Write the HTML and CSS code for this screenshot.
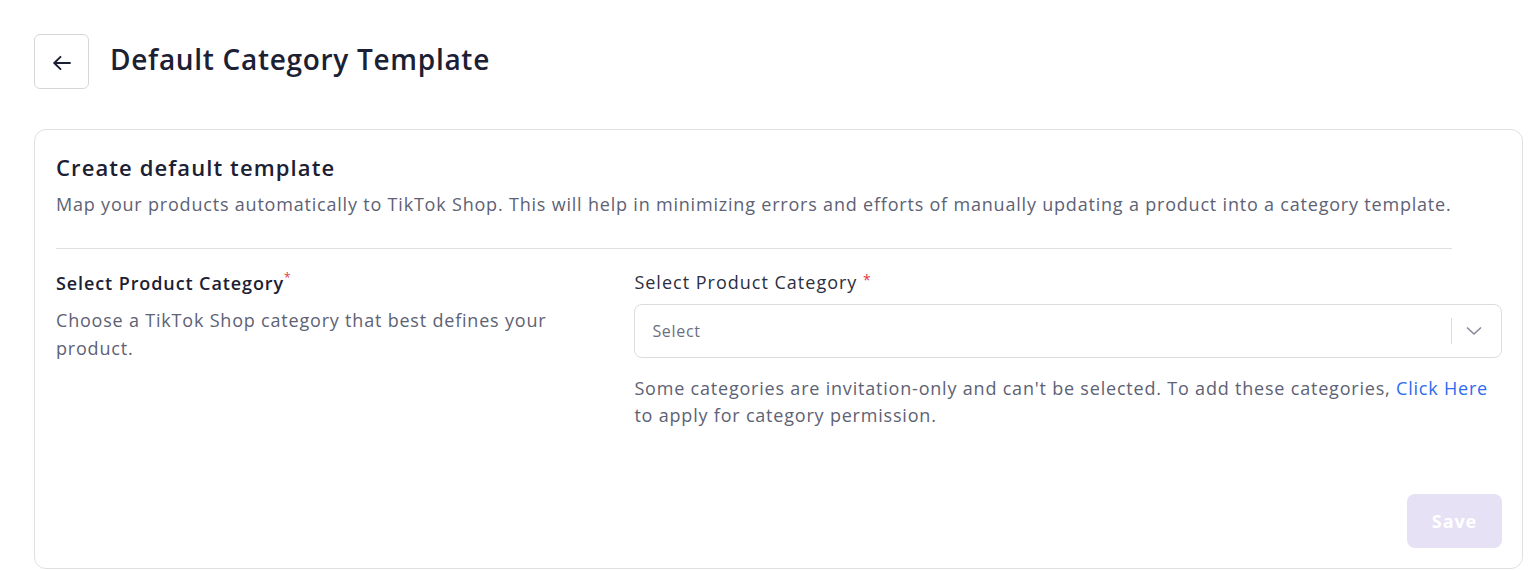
FILE: index.html
```html
<!DOCTYPE html>
<html lang="en">
<head>
<meta charset="utf-8">
<title>Default Category Template</title>
<link rel="stylesheet" href="styles.css">
</head>
<body>
<div class="page">
  <div class="page-header">
    <button class="back-btn" aria-label="Back">
      <svg width="20" height="20" viewBox="0 0 20 20" fill="none" stroke="#1c2033" stroke-width="1.9" stroke-linecap="round" stroke-linejoin="round">
        <path d="M18 10H2.5"/>
        <path d="M8.5 3.8L2.3 10l6.2 6.2"/>
      </svg>
    </button>
    <h1 class="page-title">Default Category Template</h1>
  </div>

  <section class="card">
    <div class="card-head">
      <h2 class="card-title">Create default template</h2>
      <p class="card-desc">Map your products automatically to TikTok Shop. This will help in minimizing errors and efforts of manually updating a product into a category template.</p>
    </div>

    <div class="form-row">
      <div class="form-info">
        <div class="info-title">Select Product Category<span class="req req-sm">*</span></div>
        <p class="info-desc">Choose a TikTok Shop category that best defines your product.</p>
      </div>
      <div class="form-field">
        <label class="field-label">Select Product Category <span class="req">*</span></label>
        <div class="select">
          <span class="select-placeholder">Select</span>
          <span class="select-sep"></span>
          <svg class="select-chevron" width="16" height="16" viewBox="0 0 16 16" fill="none" stroke="#8a8d99" stroke-width="1.7" stroke-linecap="round" stroke-linejoin="round">
            <path d="M1.5 5L8 11l6.5-6"/>
          </svg>
        </div>
        <p class="field-help">Some categories are invitation-only and can't be selected. To add these categories, <a class="link" href="#">Click Here</a> to apply for category permission.</p>
      </div>
    </div>

    <div class="card-actions">
      <button class="save-btn" disabled>Save</button>
    </div>
  </section>
</div>
</body>
</html>
```

FILE: styles.css
```css
* { box-sizing: border-box; }
html, body { margin: 0; padding: 0; background: #ffffff; }
body {
  font-family: "Open Sans", "Liberation Sans", sans-serif;
  color: #1c2033;
  letter-spacing: 0.8px;
}
.page { padding: 34px 14px 0 34px; }

.page-header {
  display: flex;
  align-items: center;
  gap: 21px;
}
.back-btn {
  width: 55px;
  height: 55px;
  border: 1px solid #d6d6d9;
  border-radius: 6px;
  background: #fff;
  display: flex;
  align-items: center;
  justify-content: center;
  padding: 0;
  padding-top: 2px;
}
.page-title {
  margin: 0 0 6px;
  font-size: 28px;
  font-weight: 600;
  color: #1c2033;
  letter-spacing: 0.7px;
}

.card {
  margin-top: 40px;
  border: 1px solid #e0e0e3;
  border-radius: 12px;
  padding: 21px 20px 20px 21px;
  min-height: 440px;
  display: flex;
  flex-direction: column;
}
.card-head {
  width: fit-content;
  border-bottom: 1px solid #e0e0e3;
  padding-bottom: 31px;
}
.card-title {
  margin: 1px 0 0;
  font-size: 22px;
  line-height: 30px;
  font-weight: 600;
  color: #1c2033;
  letter-spacing: 1.1px;
}
.card-desc {
  margin: 9px 0 0;
  font-size: 18px;
  line-height: 26px;
  color: #5d6274;
}

.form-row {
  display: grid;
  grid-template-columns: 2fr 3fr;
  margin-top: 21px;
}
.form-info { padding-right: 40px; }
.info-title {
  font-size: 18px;
  line-height: 26px;
  font-weight: 600;
  color: #1c2033;
  letter-spacing: 0.9px;
}
.req { color: #e0383e; font-size: 14px; vertical-align: top; font-weight: 400; line-height: 20px; letter-spacing: 0; }
.req-sm { font-size: 12px; line-height: 16px; }
.info-desc {
  margin: 10px 0 0;
  font-size: 18px;
  line-height: 28px;
  color: #5d6274;
}

.field-label {
  display: block;
  font-size: 18px;
  line-height: 24px;
  color: #2b2f40;
  letter-spacing: 1px;
}
.select {
  margin-top: 10px;
  height: 54px;
  border: 1px solid #dcdce0;
  border-radius: 8px;
  display: flex;
  align-items: center;
  padding: 0 19px 0 17px;
}
.select-placeholder {
  flex: 1;
  font-size: 16px;
  color: #6b6f7e;
  letter-spacing: 0.7px;
}
.select-sep {
  width: 1px;
  height: 26px;
  background: #dcdce0;
  margin-right: 14px;
}
.select-chevron { display: block; }
.field-help {
  margin: 17px 0 0;
  font-size: 18px;
  line-height: 27px;
  color: #5d6274;
}
.link { color: #2f6bf0; text-decoration: none; }

.card-actions {
  margin-top: auto;
  display: flex;
  justify-content: flex-end;
}
.save-btn {
  width: 95px;
  height: 54px;
  border: none;
  border-radius: 8px;
  background: #e6e1f5;
  color: #ffffff;
  font-family: inherit;
  font-size: 18px;
  font-weight: 700;
  letter-spacing: 0.9px;
}
```
